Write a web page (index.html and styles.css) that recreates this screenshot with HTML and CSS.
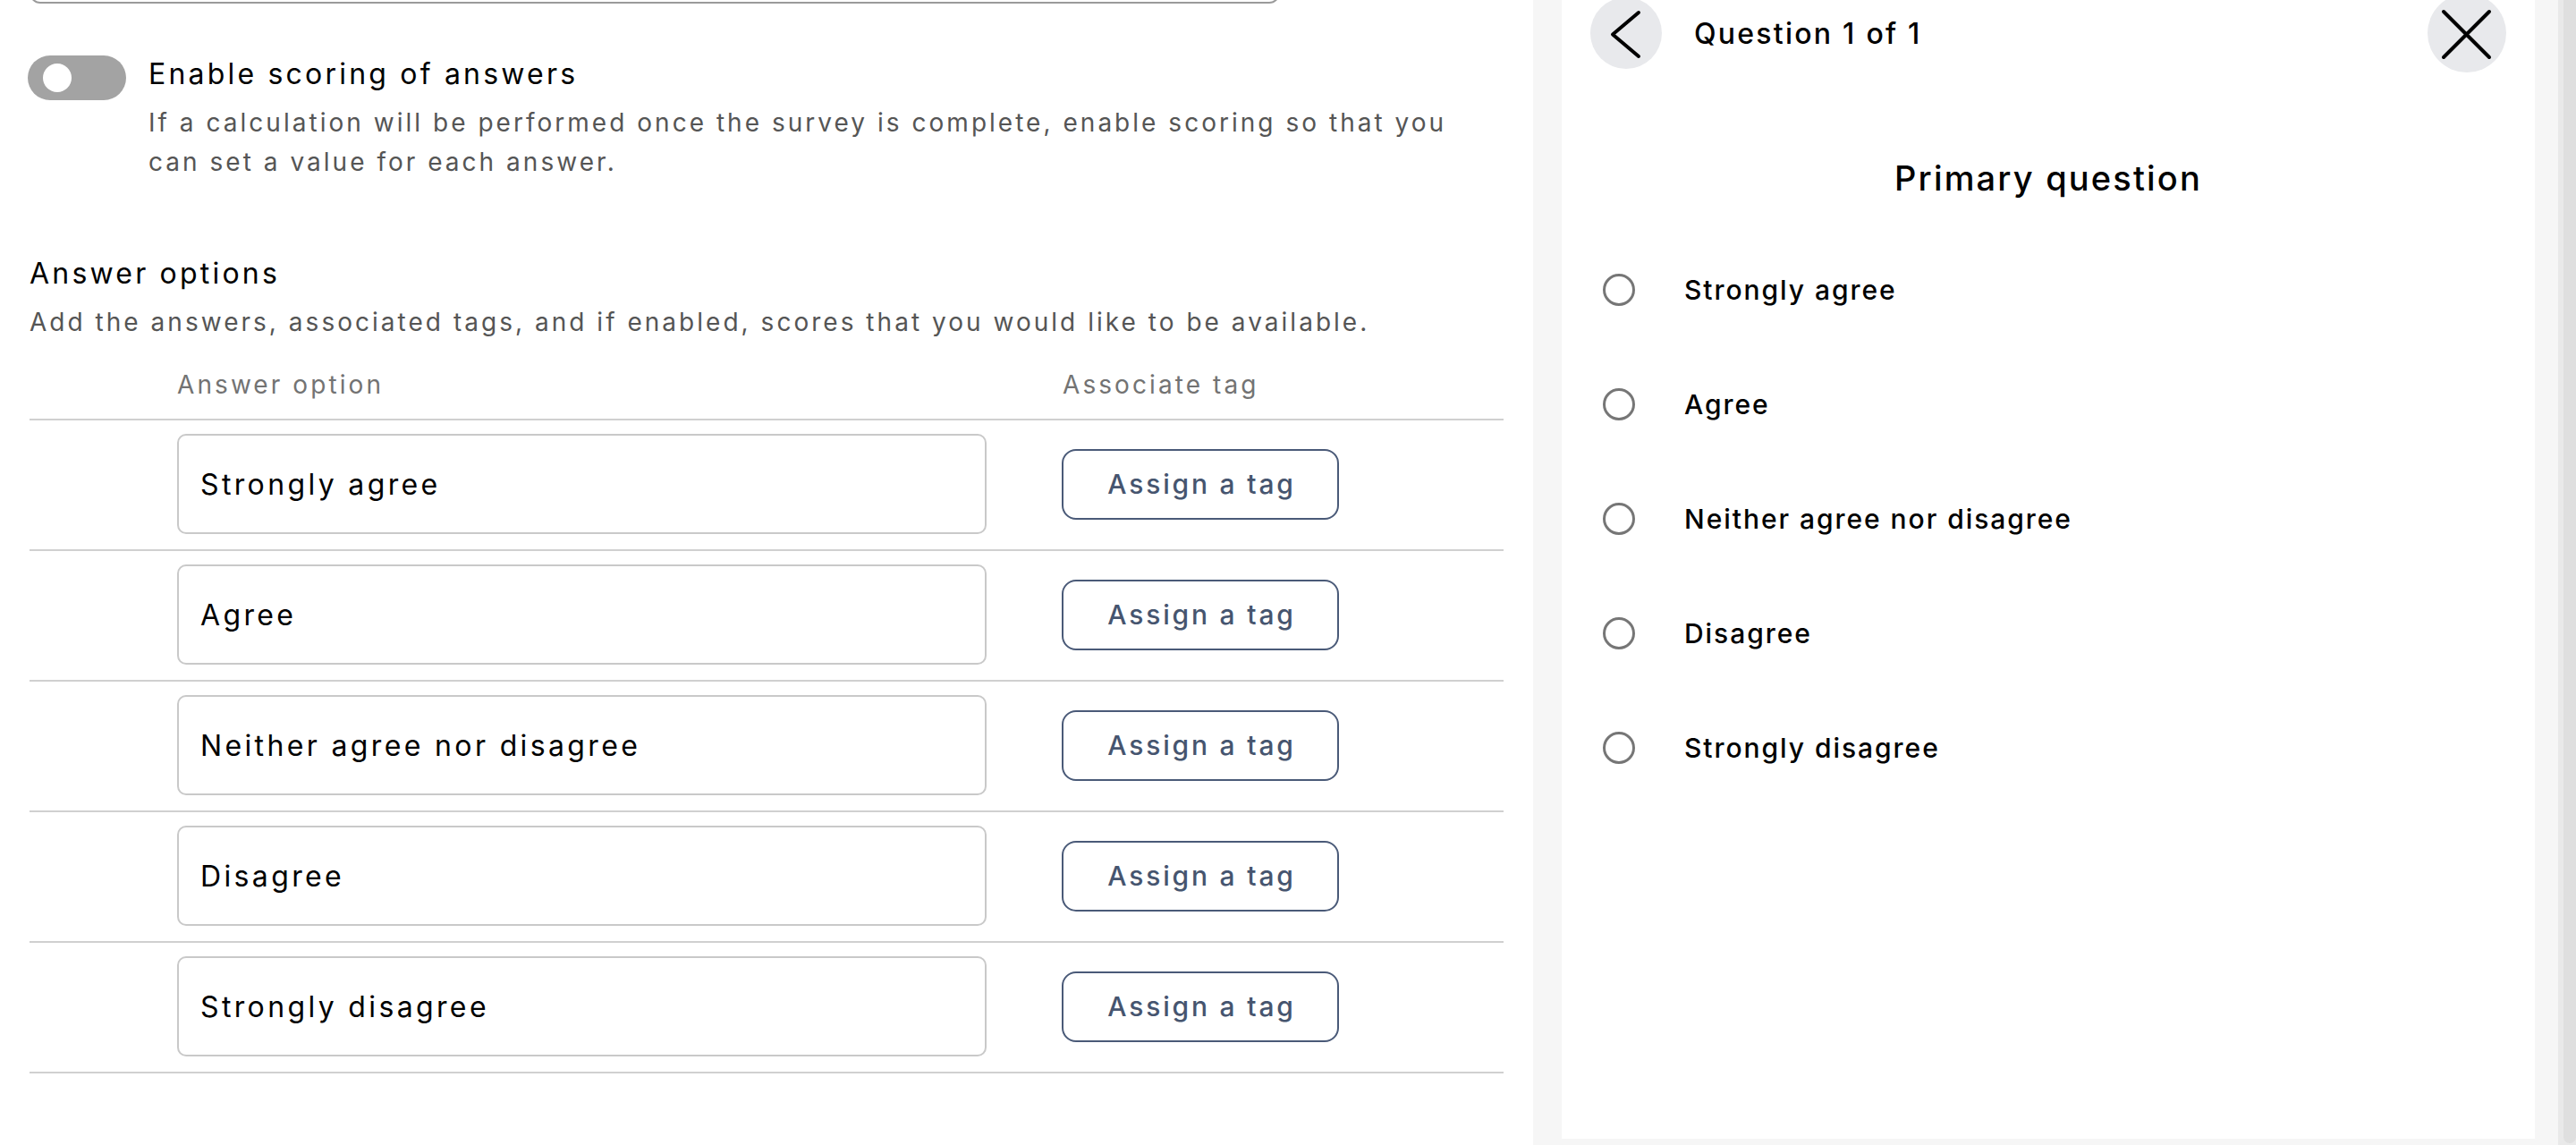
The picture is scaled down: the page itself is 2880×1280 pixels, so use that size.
FILE: index.html
```html
<!DOCTYPE html>
<html lang="en">
<head>
<meta charset="utf-8">
<title>Answer options</title>
<link rel="stylesheet" href="styles.css">
</head>
<body>
<div class="page">
  <main class="editor">
    <div class="prev-field"></div>

    <div class="toggle-row">
      <div class="toggle"><span class="knob"></span></div>
      <div class="toggle-text">
        <div class="toggle-title">Enable scoring of answers</div>
        <p class="toggle-desc">If a calculation will be performed once the survey is complete, enable scoring so that you can set a value for each answer.</p>
      </div>
    </div>

    <h2 class="section-title">Answer options</h2>
    <p class="section-desc">Add the answers, associated tags, and if enabled, scores that you would like to be available.</p>

    <div class="table">
      <div class="thead">
        <div class="th th-answer">Answer option</div>
        <div class="th th-tag">Associate tag</div>
      </div>
      <div class="tr">
        <div class="answer-input">Strongly agree</div>
        <button class="tag-btn">Assign a tag</button>
      </div>
      <div class="tr">
        <div class="answer-input">Agree</div>
        <button class="tag-btn">Assign a tag</button>
      </div>
      <div class="tr">
        <div class="answer-input">Neither agree nor disagree</div>
        <button class="tag-btn">Assign a tag</button>
      </div>
      <div class="tr">
        <div class="answer-input">Disagree</div>
        <button class="tag-btn">Assign a tag</button>
      </div>
      <div class="tr">
        <div class="answer-input">Strongly disagree</div>
        <button class="tag-btn">Assign a tag</button>
      </div>
    </div>
  </main>

  <aside class="preview">
    <div class="card">
      <div class="q-head">
        <button class="circle-btn back-btn" aria-label="Back">
          <svg width="80" height="80" viewBox="0 0 80 80"><polyline points="54,17 25,41.5 54,66" fill="none" stroke="#000" stroke-width="4" stroke-linecap="round" stroke-linejoin="round"/></svg>
        </button>
        <div class="q-count">Question 1 of 1</div>
        <button class="circle-btn close-btn" aria-label="Close">
          <svg width="88" height="88" viewBox="0 0 88 88"><path d="M18 20 L69 71 M69 20 L18 71" fill="none" stroke="#000" stroke-width="4" stroke-linecap="round"/></svg>
        </button>
      </div>
      <h3 class="q-title">Primary question</h3>
      <ul class="options">
        <li class="option"><span class="radio"></span><span class="opt-label">Strongly agree</span></li>
        <li class="option"><span class="radio"></span><span class="opt-label">Agree</span></li>
        <li class="option"><span class="radio"></span><span class="opt-label">Neither agree nor disagree</span></li>
        <li class="option"><span class="radio"></span><span class="opt-label">Disagree</span></li>
        <li class="option"><span class="radio"></span><span class="opt-label">Strongly disagree</span></li>
      </ul>
    </div>
  </aside>
  <div class="scrollbar"><div class="thumb"></div></div>
</div>
</body>
</html>
```

FILE: styles.css
```css
* { box-sizing: border-box; }

html, body {
  margin: 0;
  padding: 0;
  background: #fff;
}

body {
  font-family: Inter, "Noto Sans", sans-serif;
  color: #000;
  width: 2880px;
  height: 1280px;
  overflow: hidden;
}

.page {
  display: flex;
  height: 1280px;
}

/* ---------- Left editor ---------- */
.editor {
  width: 1681px;
  padding-left: 33px;
  flex: none;
}

.prev-field {
  width: 1398px;
  height: 64px;
  margin-top: -60px;
  border: 2px solid #9a9a9a;
  border-radius: 12px;
}

.toggle-row {
  display: flex;
  align-items: flex-start;
  margin-top: 57px;
}

.toggle {
  flex: none;
  width: 110px;
  height: 50px;
  margin-top: 1px;
  margin-left: -2px;
  border-radius: 25px;
  background: #a3a3a3;
  display: flex;
  align-items: center;
  padding-left: 17px;
}

.knob {
  width: 32px;
  height: 32px;
  border-radius: 50%;
  background: #fff;
}

.toggle-text {
  margin-left: 25px;
}

.toggle-title {
  font-size: 32px;
  line-height: 44px;
  letter-spacing: 0.1em;
}

.toggle-desc {
  margin: 10px 0 0;
  font-size: 28px;
  line-height: 44px;
  letter-spacing: 0.108em;
  color: #555;
  width: 1480px;
}

.section-title {
  margin: 81px 0 0;
  font-size: 32px;
  line-height: 44px;
  font-weight: 400;
  letter-spacing: 0.1em;
}

.section-desc {
  margin: 10px 0 0;
  font-size: 28px;
  line-height: 44px;
  letter-spacing: 0.108em;
  color: #555;
}

.table {
  margin-top: 26px;
  width: 1648px;
}

.thead {
  display: flex;
  padding-bottom: 16px;
  border-bottom: 2px solid #d0d0d0;
  font-size: 28px;
  line-height: 44px;
  letter-spacing: 0.11em;
  color: #737373;
}

.th-answer {
  margin-left: 165px;
  width: 990px;
}

.tr {
  display: flex;
  align-items: center;
  padding: 15px 0 17px;
  border-bottom: 2px solid #d0d0d0;
}

.answer-input {
  margin-left: 165px;
  width: 905px;
  height: 112px;
  border: 2px solid #c9c9c9;
  border-radius: 10px;
  display: flex;
  align-items: center;
  padding-left: 24px;
  font-size: 32px;
  letter-spacing: 0.105em;
  color: #000;
}

.tag-btn {
  margin-left: 84px;
  width: 310px;
  height: 79px;
  border: 2px solid #4a5a78;
  border-radius: 16px;
  background: #fff;
  font-family: inherit;
  font-size: 30px;
  font-weight: 500;
  letter-spacing: 2.8px;
  color: #46556f;
  padding: 0 0 0 3px;
}

/* ---------- Right preview ---------- */
.preview {
  flex: none;
  width: 1146px;
  margin-left: 33px;
  background: #f6f6f6;
  padding: 0 26px 0 32px;
}

.card {
  background: #fff;
  height: 100%;
  padding: 0 32px;
}

.q-head {
  display: flex;
  align-items: center;
  height: 88px;
  margin-top: -7px;
}

.circle-btn {
  flex: none;
  border: none;
  padding: 0;
  border-radius: 50%;
  background: #e8e9ec;
  display: flex;
  align-items: center;
  justify-content: center;
}

.back-btn {
  width: 80px;
  height: 80px;
}

.close-btn {
  width: 88px;
  height: 88px;
  margin-left: auto;
}

.q-count {
  margin-left: 36px;
  font-size: 32px;
  font-weight: 500;
  letter-spacing: 0.07em;
}

.q-title {
  margin: 93px 0 0;
  text-align: center;
  font-size: 38px;
  line-height: 50px;
  font-weight: 500;
  letter-spacing: 0.057em;
}

.options {
  list-style: none;
  margin: 36px 0 0;
  padding: 0 0 0 14px;
}

.option {
  display: flex;
  align-items: center;
  height: 128px;
}

.radio {
  flex: none;
  width: 36px;
  height: 36px;
  border: 3px solid #767676;
  border-radius: 50%;
}

.opt-label {
  margin-left: 55px;
  font-size: 30px;
  font-weight: 500;
  letter-spacing: 0.065em;
}

.scrollbar {
  flex: none;
  width: 20px;
  background: #e9e9e9;
  display: flex;
  justify-content: flex-end;
}

.thumb {
  width: 14px;
  height: 1278px;
  border-radius: 0 0 7px 7px;
  background: #dfdfdf;
}
```
